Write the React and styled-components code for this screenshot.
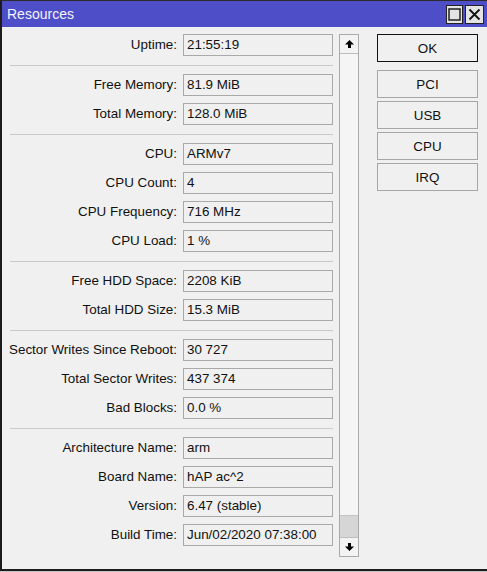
import React from 'react';
import styled, { createGlobalStyle } from 'styled-components';

const GlobalStyle = createGlobalStyle`
  html, body {
    margin: 0;
    padding: 0;
    background: #c4c4c4;
  }
  body {
    font-family: "Liberation Sans", Arial, sans-serif;
    font-size: 13.4px;
    color: #111;
  }
`;

const Window = styled.div`
  width: 487px;
  height: 571px;
  box-sizing: border-box;
  border-top: 1px solid #2a2a2a;
  border-left: 2px solid #1c1c1c;
  border-bottom: 2px solid #1c1c1c;
  background: #f0f0f0;
  display: flex;
  flex-direction: column;
`;

const TitleBar = styled.div`
  height: 26px;
  background: #4e4ec8;
  display: flex;
  align-items: center;
  padding: 0 3px 0 5px;
  flex-shrink: 0;
`;

const Title = styled.div`
  flex: 1;
  color: #f4f4ff;
  font-size: 14px;
`;

const TitleButton = styled.div`
  width: ${(p) => p.$w}px;
  height: 19px;
  box-sizing: border-box;
  border: 1px solid #222;
  background: #e4e4e4;
  margin-left: 2px;
  display: flex;
  align-items: center;
  justify-content: center;
`;

const Body = styled.div`
  flex: 1;
  display: flex;
  padding-top: 7px;
`;

const FieldList = styled.div`
  width: 331px;
  display: flex;
  flex-direction: column;
`;

const Section = styled.div`
  display: grid;
  grid-template-columns: 167px 150px;
  column-gap: 6px;
  row-gap: 7px;
  padding-left: 8px;
`;

const Separator = styled.div`
  height: 1px;
  margin: 9px 0 8px 8px;
  background: #cacaca;
`;

const Label = styled.div`
  text-align: right;
  white-space: nowrap;
  line-height: 22px;
  direction: rtl;
`;

const LabelText = styled.span`
  direction: ltr;
  unicode-bidi: isolate;
`;

const Field = styled.div`
  height: 22px;
  box-sizing: border-box;
  border: 1px solid #a9a9a9;
  background: #f0f0f0;
  padding-left: 3px;
  line-height: 20px;
  white-space: nowrap;
  overflow: hidden;
`;

const ScrollBar = styled.div`
  width: 20px;
  height: 523px;
  box-sizing: border-box;
  margin-left: 6px;
  border: 1px solid #ababab;
  background: #f5f5f5;
  display: flex;
  flex-direction: column;
`;

const ScrollArrow = styled.div`
  height: 18px;
  display: flex;
  align-items: center;
  justify-content: center;
  background: #f3f3f3;
  border-${(p) => (p.$down ? 'top' : 'bottom')}: 1px solid #bdbdbd;
`;

const ScrollTrack = styled.div`
  flex: 1;
  display: flex;
  flex-direction: column;
  justify-content: flex-end;
`;

const ScrollThumb = styled.div`
  height: 21px;
  background: #d6d6d6;
  border-top: 1px solid #c4c4c4;
`;

const ButtonColumn = styled.div`
  margin-left: 18px;
  width: 101px;
  display: flex;
  flex-direction: column;
  gap: 3px;
`;

const Button = styled.div`
  height: 28px;
  box-sizing: border-box;
  border: 1px solid ${(p) => (p.$default ? '#111' : '#a6a6a6')};
  background: #f0f0f0;
  display: flex;
  align-items: center;
  justify-content: center;
  margin-bottom: ${(p) => (p.$default ? '5px' : '0')};
`;

const sections = [
  [['Uptime:', '21:55:19']],
  [
    ['Free Memory:', '81.9 MiB'],
    ['Total Memory:', '128.0 MiB'],
  ],
  [
    ['CPU:', 'ARMv7'],
    ['CPU Count:', '4'],
    ['CPU Frequency:', '716 MHz'],
    ['CPU Load:', '1 %'],
  ],
  [
    ['Free HDD Space:', '2208 KiB'],
    ['Total HDD Size:', '15.3 MiB'],
  ],
  [
    ['Sector Writes Since Reboot:', '30 727'],
    ['Total Sector Writes:', '437 374'],
    ['Bad Blocks:', '0.0 %'],
  ],
  [
    ['Architecture Name:', 'arm'],
    ['Board Name:', 'hAP ac^2'],
    ['Version:', '6.47 (stable)'],
    ['Build Time:', 'Jun/02/2020 07:38:00'],
  ],
];

function Arrow({ down }) {
  return (
    <svg width="9" height="8" viewBox="0 0 9 8" style={down ? { transform: 'rotate(180deg)' } : undefined}>
      <polygon points="4.5,0 9,4.5 6,4.5 6,8 3,8 3,4.5 0,4.5" fill="#000" />
    </svg>
  );
}

export default function App() {
  return (
    <>
      <GlobalStyle />
      <Window>
        <TitleBar>
          <Title>Resources</Title>
          <TitleButton $w={17}>
            <svg width="13" height="13" viewBox="0 0 13 13">
              <rect x="1" y="1" width="11" height="11" fill="none" stroke="#222" strokeWidth="1.5" />
            </svg>
          </TitleButton>
          <TitleButton $w={19}>
            <svg width="13" height="13" viewBox="0 0 13 13">
              <path d="M1.5 1.5 L11.5 11.5 M11.5 1.5 L1.5 11.5" stroke="#111" strokeWidth="1.8" />
            </svg>
          </TitleButton>
        </TitleBar>
        <Body>
          <FieldList>
            {sections.map((rows, i) => (
              <React.Fragment key={i}>
                {i > 0 && <Separator />}
                <Section>
                  {rows.map(([label, value]) => (
                    <React.Fragment key={label}>
                      <Label>
                        <LabelText>{label}</LabelText>
                      </Label>
                      <Field>{value}</Field>
                    </React.Fragment>
                  ))}
                </Section>
              </React.Fragment>
            ))}
          </FieldList>
          <ScrollBar>
            <ScrollArrow>
              <Arrow />
            </ScrollArrow>
            <ScrollTrack>
              <ScrollThumb />
            </ScrollTrack>
            <ScrollArrow $down>
              <Arrow down />
            </ScrollArrow>
          </ScrollBar>
          <ButtonColumn>
            <Button $default>OK</Button>
            <Button>PCI</Button>
            <Button>USB</Button>
            <Button>CPU</Button>
            <Button>IRQ</Button>
          </ButtonColumn>
        </Body>
      </Window>
    </>
  );
}
